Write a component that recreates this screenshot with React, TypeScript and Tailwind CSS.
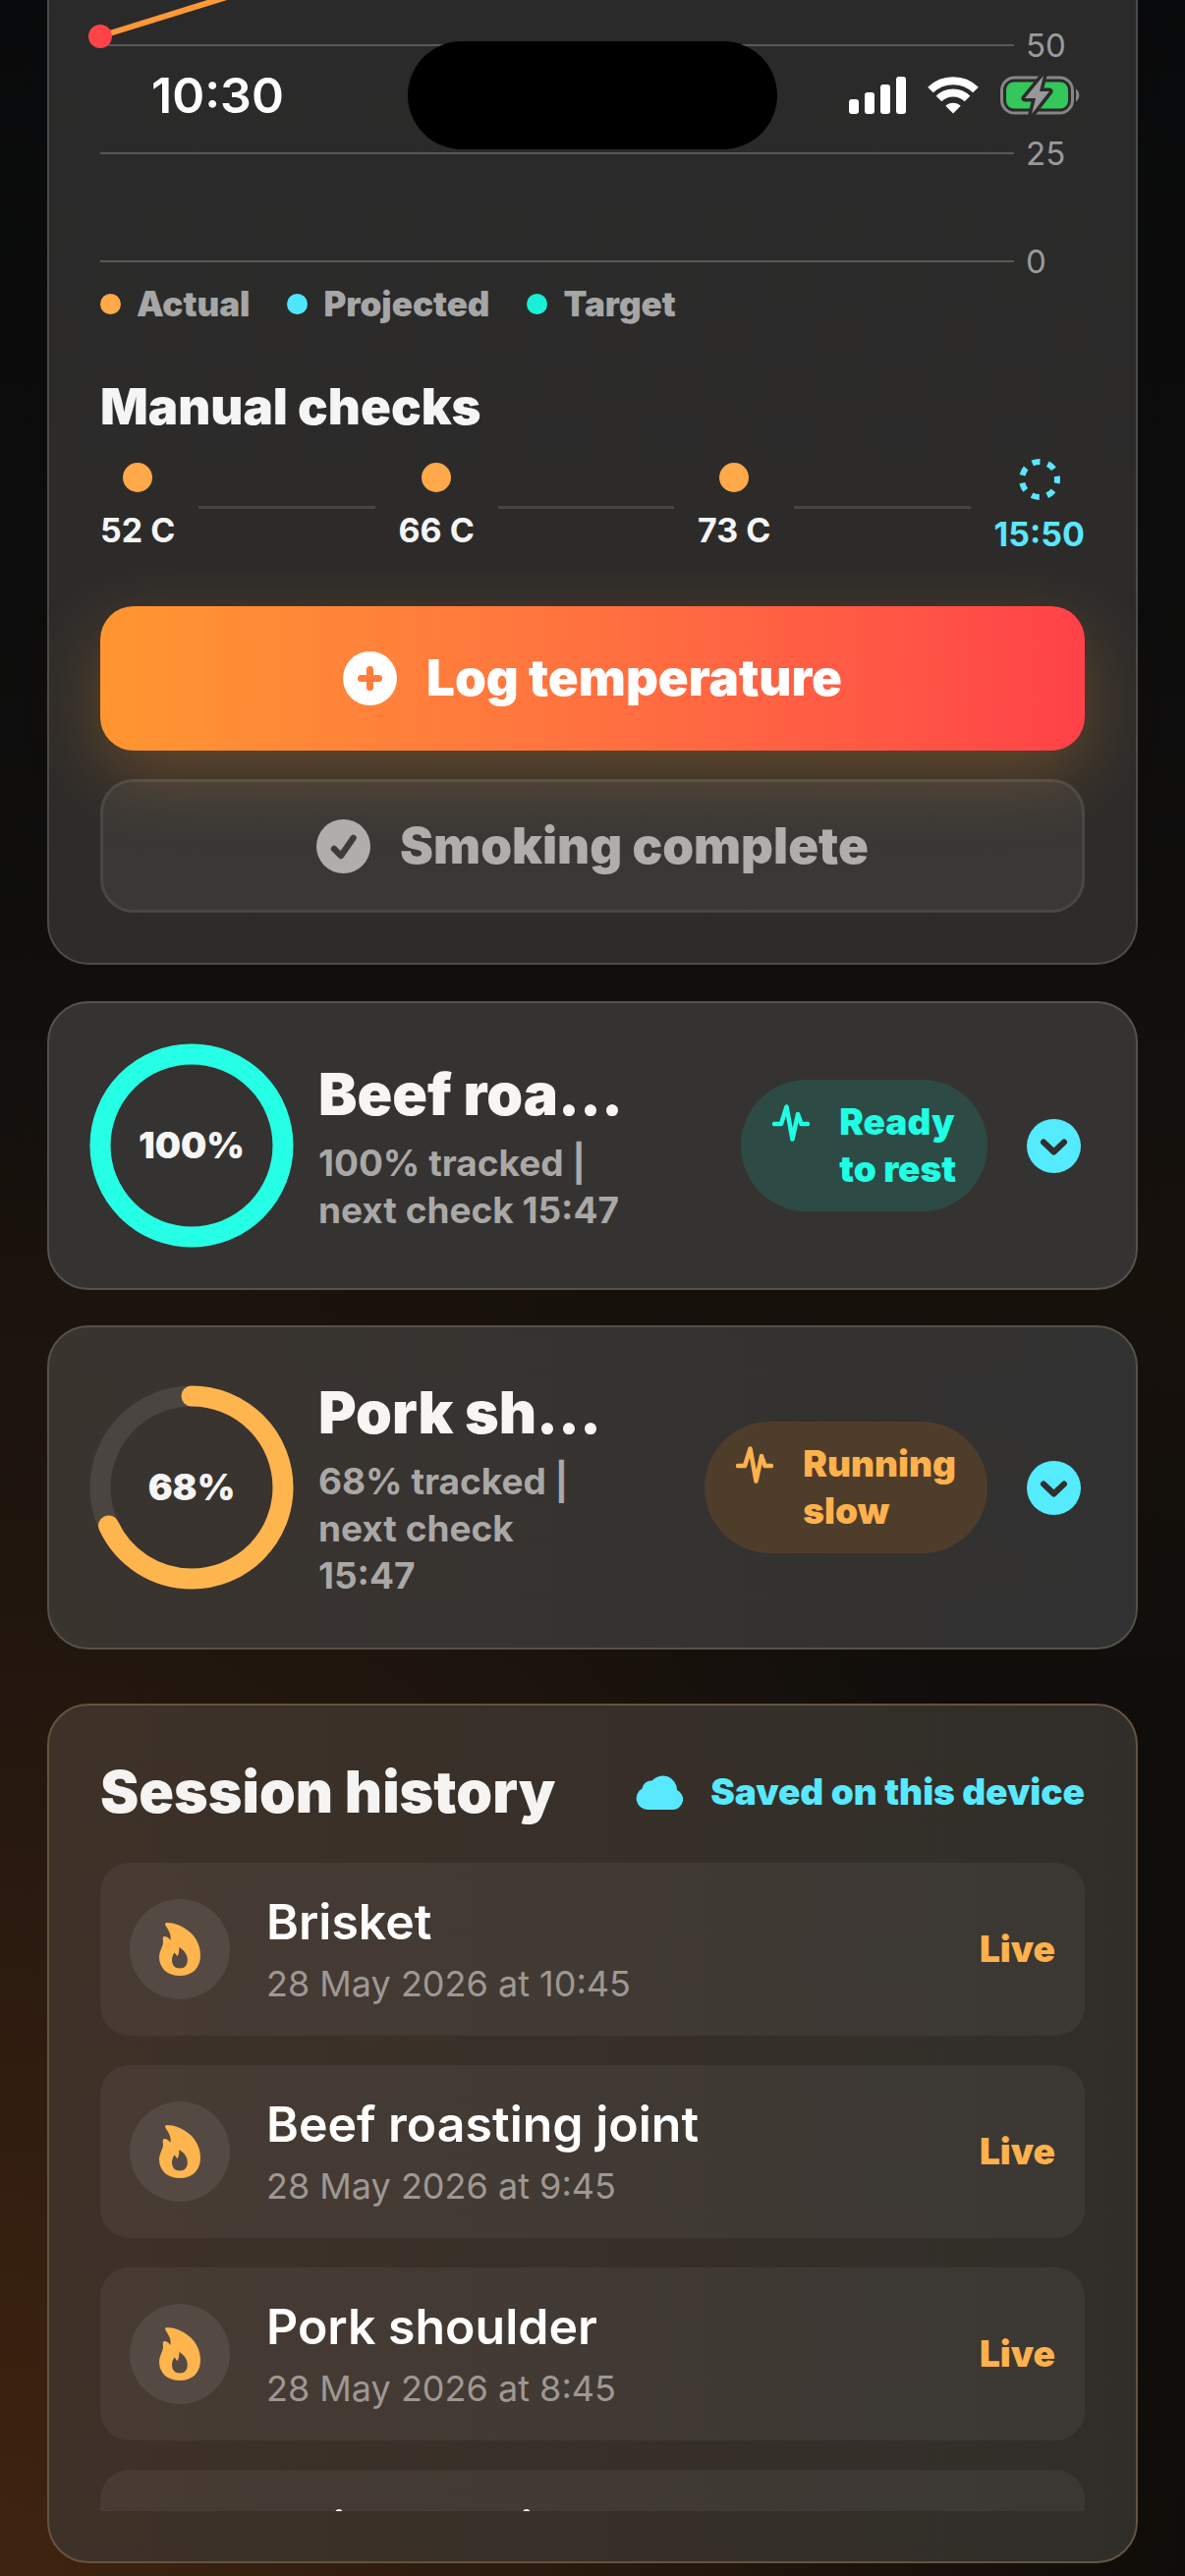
import type { ReactNode } from "react";

const sessions = [
  { name: "Brisket", date: "28 May 2026 at 10:45", live: true },
  { name: "Beef roasting joint", date: "28 May 2026 at 9:45", live: true },
  { name: "Pork shoulder", date: "28 May 2026 at 8:45", live: true },
  { name: "Chicken thighs", date: "", live: false },
];

const checks = ["52 C", "66 C", "73 C"];

const legend = [
  { label: "Actual", dot: "bg-[#ffa94a]" },
  { label: "Projected", dot: "bg-[#4ee6ff]" },
  { label: "Target", dot: "bg-[#18f0d8]" },
];

function StatusBar() {
  return (
    <header className="absolute inset-x-0 top-0 flex h-[194px] items-center justify-between px-[106px]">
      <time className="w-[240px] pl-12 text-[50px] font-semibold text-white">10:30</time>
      <div className="h-[110px] w-[376px] rounded-full bg-black" />
      <div className="flex w-[240px] items-center justify-end gap-[22px]">
        <svg width="58" height="38" viewBox="0 0 58 38" fill="#fff" aria-hidden="true">
          <rect x="0" y="23" width="10" height="15" rx="3" />
          <rect x="16" y="16" width="10" height="22" rx="3" />
          <rect x="32" y="8" width="10" height="30" rx="3" />
          <rect x="48" y="0" width="10" height="38" rx="3" />
        </svg>
        <svg width="52" height="38" viewBox="0 0 52 38" fill="none" aria-hidden="true">
          <path d="M3 13.500 A33 33 0 0 1 49 13.500" stroke="#fff" strokeWidth="8" />
          <path d="M11.500 22.500 A20.500 20.500 0 0 1 40.500 22.500" stroke="#fff" strokeWidth="8" />
          <path d="M26 37.500 L18.300 29.800 A11 11 0 0 1 33.700 29.800 Z" fill="#fff" />
        </svg>
        <svg width="82" height="46" viewBox="0 0 82 46" fill="none" aria-hidden="true">
          <rect x="1.500" y="5" width="72" height="36" rx="13" stroke="#868686" strokeWidth="3" />
          <rect x="6" y="9.500" width="63" height="27" rx="8" fill="#34c759" />
          <path d="M77 16.500 a8 8 0 0 1 0 13 z" fill="#868686" />
          <path
            d="M44 3 L25 26 H36 L32 42 L50 19 H40 Z"
            fill="#98989b"
            stroke="#2b2b2b"
            strokeWidth="7"
            strokeLinejoin="round"
            paintOrder="stroke"
          />
        </svg>
      </div>
    </header>
  );
}

function Panel({ className, children }: { className: string; children: ReactNode }) {
  return <section className={`border-[2px] ${className}`}>{children}</section>;
}

function Chart() {
  return (
    <div className="relative flex flex-col gap-[70px] pt-[26px]">
      {["50", "25", "0"].map((tick) => (
        <div key={tick} className="flex h-10 items-center gap-3">
          <div className="h-[2px] flex-1 bg-[#585858]" />
          <span className="w-[60px] text-[33px] leading-10 text-[#9a9a9a]">{tick}</span>
        </div>
      ))}
      <svg className="absolute top-0 left-0 overflow-visible" width="140" height="50" aria-hidden="true">
        <path d="M0 37 L132 -4" stroke="#ff9838" strokeWidth="6" />
        <circle cx="0" cy="37" r="12" fill="#ff4348" />
      </svg>
    </div>
  );
}

function ManualChecks() {
  return (
    <div className="flex items-center gap-6 text-[34px] leading-[42px] font-bold">
      {checks.map((value) => (
        <div key={value} className="contents">
          <div className="flex flex-col items-center gap-[18px] text-[#f5f5f5]">
            <span className="size-[30px] rounded-full bg-[#ffa94a]" />
            {value}
          </div>
          <div className="h-[3px] flex-1 bg-[#464544]" />
        </div>
      ))}
      <div className="flex flex-col items-center gap-[14px] text-[#5ce6fc]">
        <svg width="42" height="42" viewBox="0 0 42 42" fill="none" aria-hidden="true">
          <circle cx="21" cy="21" r="18" stroke="#5ce6fc" strokeWidth="6" strokeDasharray="8 8.157" strokeDashoffset="4" />
        </svg>
        15:50
      </div>
    </div>
  );
}

function ProgressRing({ percent, color }: { percent: number; color: string }) {
  const length = 2 * Math.PI * 93;
  return (
    <div className="relative grid size-[186px] shrink-0 place-items-center">
      <svg className="absolute inset-0 -rotate-90 overflow-visible" viewBox="0 0 186 186" fill="none" aria-hidden="true">
        <circle cx="93" cy="93" r="93" stroke="#4a4541" strokeWidth="21" />
        <circle
          cx="93"
          cy="93"
          r="93"
          stroke={color}
          strokeWidth="21"
          strokeLinecap="round"
          strokeDasharray={`${(length * percent) / 100} ${length}`}
        />
      </svg>
      <span className="text-[37px] font-black text-[#f5f5f5]">{percent}%</span>
    </div>
  );
}

function CookCard(props: {
  percent: number;
  color: string;
  title: string;
  detail: string[];
  status: string[];
  pill: string;
  className: string;
}) {
  return (
    <Panel className={`flex items-center rounded-[42px] pr-[56px] pl-[52px] ${props.className}`}>
      <ProgressRing percent={props.percent} color={props.color} />
      <div className="ml-9 min-w-0 flex-1">
        <h2 className="pt-[2px] pb-[10px] text-[59px] leading-[72px] font-black whitespace-nowrap text-[#f7f6f5]">
          {props.title}
        </h2>
        <p className="text-[37px] leading-[48px] font-bold whitespace-nowrap text-[#aaa8a6]">
          {props.detail.map((line) => (
            <span key={line} className="block">
              {line}
            </span>
          ))}
        </p>
      </div>
      <div className={`flex shrink-0 gap-[30px] rounded-full px-8 py-[19px] text-[37px] leading-[48px] font-black ${props.pill}`}>
        <svg className="mt-[6px]" width="38" height="38" viewBox="0 0 38 38" fill="none" aria-hidden="true">
          <path
            d="M2 20 H9 L14.500 2.500 L20.500 35.500 L26 10 L29.500 20 H36"
            stroke="currentColor"
            strokeWidth="4.500"
            strokeLinecap="round"
            strokeLinejoin="round"
          />
        </svg>
        <span>
          {props.status.map((line) => (
            <span key={line} className="block">
              {line}
            </span>
          ))}
        </span>
      </div>
      <button type="button" aria-label="Expand" className="ml-10 size-[55px] shrink-0 rounded-full bg-[#55ebff]">
        <svg viewBox="0 0 55 55" fill="none" aria-hidden="true">
          <path d="M17 23.500 L27.500 33.500 L38 23.500" stroke="#2f2f2e" strokeWidth="6" strokeLinecap="round" strokeLinejoin="round" />
        </svg>
      </button>
    </Panel>
  );
}

function Flame() {
  return (
    <svg width="42" height="54" viewBox="0 0 42 54" aria-hidden="true">
      <path
        fillRule="evenodd"
        fill="#ffb54e"
        d="M8 0 C22 0 42 12 42 33 C42 46 34 54 21 54 C8 54 0 46 0 35 C0 29 4 24 4 20 C4 17 3 14 5.500 14 C8 14 10 16 11.500 18 C12.500 11 9 7 6.500 3 C5.500 1 6.500 0 8 0 Z M20.500 25 C20 29 20.500 31 18.500 34 C17.500 33.500 17 31.500 15.500 30.500 C14 33 13 35 13 38 C13 43 16 46.500 21 46.500 C26 46.500 28.800 43 28.800 38 C28.800 32 25 28 20.500 25 Z"
      />
    </svg>
  );
}

export default function App() {
  return (
    <main className="relative min-h-screen overflow-hidden bg-[#100e0c] bg-[radial-gradient(ellipse_1200px_1500px_at_0%_100%,#3f2410_0%,#28190f_50%,transparent_100%),linear-gradient(to_bottom,#090a0b_0%,#0f0e0d_35%,#17110c_50%,#100e0b_65%,#0f0c09_100%)] px-12 pb-[13px] font-[Inter,'Liberation_Sans',sans-serif]">
      <Panel className="rounded-b-[42px] border-t-0 border-[#4c4b4a] bg-linear-to-b from-[#2a2a2a] to-[#2e2c2a] px-[52px] pb-[51px]">
        <Chart />
        <div className="mt-1 flex gap-[38px] text-[35px] leading-[38px] font-black text-[#a6a6a6]">
          {legend.map(({ label, dot }) => (
            <span key={label} className="flex items-center gap-4">
              <span className={`size-[21px] rounded-full ${dot}`} />
              {label}
            </span>
          ))}
        </div>
        <h2 className="mt-[56px] mb-[23px] text-[51px] leading-[60px] font-black text-[#f5f5f5]">Manual checks</h2>
        <ManualChecks />
        <button
          type="button"
          className="mt-[52px] flex h-[147px] w-full items-center justify-center gap-[30px] rounded-[34px] bg-linear-to-r from-[#ff9630] to-[#ff4148] text-[51px] font-black text-white shadow-[0_24px_72px_rgba(255,160,50,0.27)]"
        >
          <svg width="55" height="55" viewBox="0 0 55 55" fill="none" aria-hidden="true">
            <circle cx="27.500" cy="27.500" r="27.500" fill="#fff" />
            <path d="M27.500 18.500 V36.500 M18.500 27.500 H36.500" stroke="#ff7d38" strokeWidth="7" strokeLinecap="round" />
          </svg>
          Log temperature
        </button>
        <button
          type="button"
          disabled
          className="mt-[29px] flex h-[136px] w-full items-center justify-center gap-[30px] rounded-[34px] border-[3px] border-white/8 bg-white/6 text-[51px] font-black text-[#b0aeac]"
        >
          <svg width="55" height="55" viewBox="0 0 55 55" fill="none" aria-hidden="true">
            <circle cx="27.500" cy="27.500" r="27.500" fill="#b0aeac" />
            <path d="M18 30 L25 37 L37.500 19" stroke="#3f3c38" strokeWidth="6.500" strokeLinecap="round" strokeLinejoin="round" />
          </svg>
          Smoking complete
        </button>
      </Panel>

      <div className="mt-[37px] flex flex-col gap-9">
        <CookCard
          percent={100}
          color="#25ffe6"
          title="Beef roa…"
          detail={["100% tracked |", "next check 15:47"]}
          status={["Ready", "to rest"]}
          pill="bg-[#2e4a44] text-[#1effe4]"
          className="border-[#55524e] bg-[#353331] py-[52px]"
        />
        <CookCard
          percent={68}
          color="#ffb54e"
          title="Pork sh…"
          detail={["68% tracked |", "next check", "15:47"]}
          status={["Running", "slow"]}
          pill="bg-[#4f3d2c] text-[#ffb14c]"
          className="border-[#565049] bg-linear-to-r from-[#3a342f] to-[#313131] py-[49px]"
        />
      </div>

      <Panel className="mt-[55px] rounded-[42px] border-[#64543f] bg-linear-to-r from-[#3e3128] to-[#302e29] px-[52px] pb-[51px]">
        <div className="flex items-center justify-between pt-[51px] pb-[35px]">
          <h2 className="text-[59px] leading-[74px] font-black text-[#f5f4f3]">Session history</h2>
          <p className="flex items-center gap-7 text-[37px] font-black text-[#58e9ff]">
            <svg width="48" height="35" viewBox="0 0 48 35" fill="currentColor" aria-hidden="true">
              <path d="M12 35 A11.500 11.500 0 0 1 6.500 13.500 A9 9 0 0 1 16.500 5.500 A14.500 14.500 0 0 1 42 15 A10.500 10.500 0 0 1 37 35 Z" />
            </svg>
            Saved on this device
          </p>
        </div>
        <ul className="flex h-[660px] flex-col gap-[30px] overflow-hidden">
          {sessions.map(({ name, date, live }) => (
            <li key={name} className="flex h-[176px] shrink-0 items-center rounded-[30px] bg-white/5 px-[30px]">
              <span className={`grid size-[102px] place-items-center rounded-full ${live ? "bg-white/8" : ""}`}>
                {live && <Flame />}
              </span>
              <div className="ml-[37px] flex-1">
                <h3 className="text-[50px] leading-[62px] font-semibold text-white">{name}</h3>
                <p className="mt-2 h-12 text-[36px] leading-[48px] text-[#9e9893]">{date}</p>
              </div>
              {live && <span className="text-[37px] font-black text-[#ffb14c]">Live</span>}
            </li>
          ))}
        </ul>
      </Panel>
      <StatusBar />
    </main>
  );
}
